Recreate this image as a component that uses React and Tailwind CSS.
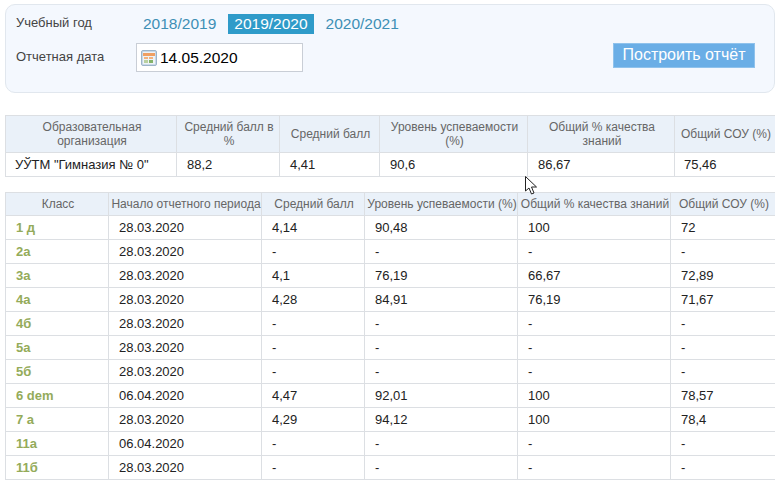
const summaryHead = [
  { label: 'Образовательная организация', w: 'w-[171px]' },
  { label: 'Средний балл в %', w: 'w-[103px]' },
  { label: 'Средний балл', w: 'w-[100px]' },
  { label: 'Уровень успеваемости (%)', w: 'w-[148px]' },
  { label: 'Общий % качества знаний', w: 'w-[147px]' },
  { label: 'Общий СОУ (%)', w: 'w-[101px]' },
];

const classHead = [
  { label: 'Класс', w: 'w-[103px]' },
  { label: 'Начало отчетного периода', w: 'w-[153px]' },
  { label: 'Средний балл', w: 'w-[103px]' },
  { label: 'Уровень успеваемости (%)', w: 'w-[153px]' },
  { label: 'Общий % качества знаний', w: 'w-[153px]' },
  { label: 'Общий СОУ (%)', w: 'w-[105px]' },
];

const classRows = [
  ['1 д', '28.03.2020', '4,14', '90,48', '100', '72'],
  ['2а', '28.03.2020', '-', '-', '-', '-'],
  ['3а', '28.03.2020', '4,1', '76,19', '66,67', '72,89'],
  ['4а', '28.03.2020', '4,28', '84,91', '76,19', '71,67'],
  ['4б', '28.03.2020', '-', '-', '-', '-'],
  ['5а', '28.03.2020', '-', '-', '-', '-'],
  ['5б', '28.03.2020', '-', '-', '-', '-'],
  ['6 dem', '06.04.2020', '4,47', '92,01', '100', '78,57'],
  ['7 а', '28.03.2020', '4,29', '94,12', '100', '78,4'],
  ['11а', '06.04.2020', '-', '-', '-', '-'],
  ['11б', '28.03.2020', '-', '-', '-', '-'],
];

function CalendarIcon() {
  return (
    <svg width="16" height="16" viewBox="0 0 16 16" className="shrink-0">
      <rect x="0.5" y="0.5" width="15" height="15" rx="1.5" fill="#c9d9e8" stroke="#9db4c9" />
      <rect x="2" y="2" width="12" height="12" fill="#eef3f7" />
      <rect x="2" y="3" width="12" height="3" fill="#ef9f63" />
      <rect x="3" y="7" width="4" height="2" fill="#f3b27e" />
      <rect x="8" y="7" width="4" height="2" fill="#f3b27e" />
      <rect x="3" y="10" width="4" height="3" fill="#b9d0a0" />
      <rect x="8" y="10" width="4" height="3" fill="#84b36a" />
    </svg>
  );
}

function Cursor() {
  return (
    <svg width="14" height="20" viewBox="0 0 14 20" className="absolute left-[525px] top-[176px]">
      <path d="M0.5 0.5 L0.5 15 L4 12 L6.5 18 L9 17 L6.5 11 L11.5 11 Z" fill="#fff" stroke="#222" strokeWidth="1" />
    </svg>
  );
}

export default function App() {
  return (
    <div className="relative w-[775px] h-[490px] overflow-hidden bg-white font-['Liberation_Sans',Arial,sans-serif] text-[12px]">
      <div className="pt-[4px] pl-[5px]">
        <div className="w-[770px] h-[89px] rounded-[10px] border border-[#e1e7ee] bg-[#f4f8fe] flex justify-between pl-[10px] pr-[19px]">
          <div>
            <div className="flex items-center h-[20px] mt-[9px]">
              <span className="w-[121px] text-[#444] text-[13px] -mt-[3px]">Учебный год</span>
              <span className="px-[6px] text-[15.5px] leading-[20px] text-[#3d8fb5] mr-[6px]">2018/2019</span>
              <span className="px-[6px] text-[15.5px] leading-[20px] text-white bg-[#2f9bc9] mr-[6px]">2019/2020</span>
              <span className="px-[6px] text-[15.5px] leading-[20px] text-[#3d8fb5]">2020/2021</span>
            </div>
            <div className="flex items-center mt-[9px]">
              <span className="w-[120px] text-[#444] text-[13px] -mt-[2px]">Отчетная дата</span>
              <div className="w-[167px] h-[29px] border border-[#c9ced6] bg-white flex items-center pl-[4px] gap-[3px] text-[15.5px] text-black">
                <CalendarIcon />
                <span>14.05.2020</span>
              </div>
            </div>
          </div>
          <button className="self-start mt-[38px] w-[142px] h-[25px] bg-[#6aaee6] border border-[#8fc2ec] text-white text-[16px] leading-[20px] pb-[2px]">
            Построить отчёт
          </button>
        </div>
      </div>

      <div className="pl-[5px] pt-[22px]">
        <table className="table-fixed border-collapse w-[770px]">
          <thead>
            <tr className="bg-[#eaf1f9] h-[37px]">
              {summaryHead.map(c => (
                <th key={c.label} className={`${c.w} border border-[#dcdfe3] pl-[6px] pr-[4px] font-normal text-center leading-[14px] text-[#666]`}>
                  {c.label}
                </th>
              ))}
            </tr>
          </thead>
          <tbody>
            <tr className="h-[24px] text-[13px] text-[#222]">
              <td className="border border-[#dcdfe3] pl-[9px]">УЎТМ "Гимназия № 0"</td>
              <td className="border border-[#dcdfe3] pl-[10px]">88,2</td>
              <td className="border border-[#dcdfe3] pl-[10px]">4,41</td>
              <td className="border border-[#dcdfe3] pl-[10px]">90,6</td>
              <td className="border border-[#dcdfe3] pl-[10px]">86,67</td>
              <td className="border border-[#dcdfe3] pl-[9px]">75,46</td>
            </tr>
          </tbody>
        </table>
      </div>

      <div className="pl-[5px] pt-[15px]">
        <table className="table-fixed border-collapse w-[770px]">
          <thead>
            <tr className="bg-[#eaf1f9] h-[23px]">
              {classHead.map(c => (
                <th key={c.label} className={`${c.w} border border-[#dcdfe3] pl-[2px] font-normal text-center whitespace-nowrap text-[#666]`}>
                  {c.label}
                </th>
              ))}
            </tr>
          </thead>
          <tbody>
            {classRows.map(row => (
              <tr key={row[0]} className="h-[24px] text-[13px] text-[#222]">
                <td className="border border-[#dcdfe3] pl-[10px] font-bold text-[#94ab5a]">{row[0]}</td>
                <td className="border border-[#dcdfe3] pl-[10px]">{row[1]}</td>
                <td className="border border-[#dcdfe3] pl-[10px]">{row[2]}</td>
                <td className="border border-[#dcdfe3] pl-[10px]">{row[3]}</td>
                <td className="border border-[#dcdfe3] pl-[10px]">{row[4]}</td>
                <td className="border border-[#dcdfe3] pl-[10px]">{row[5]}</td>
              </tr>
            ))}
          </tbody>
        </table>
      </div>

      <Cursor />
    </div>
  );
}
